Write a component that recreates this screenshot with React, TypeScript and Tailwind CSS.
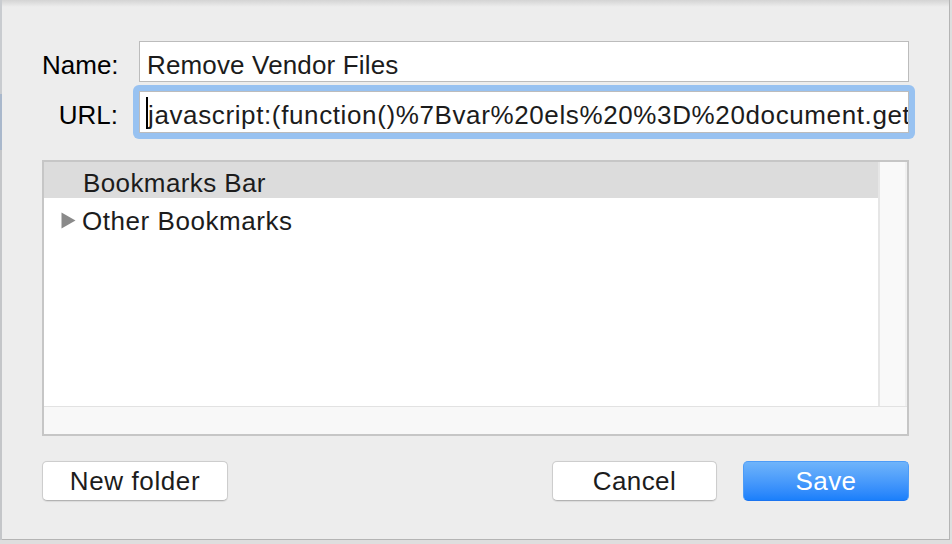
import React from "react";

const font = "font-['Liberation_Sans','Helvetica',Arial,sans-serif]";

function Triangle() {
  return (
    <svg width="15" height="17" viewBox="0 0 15 17" className="shrink-0">
      <path d="M0.5 0.5 L14.5 8.5 L0.5 16.5 Z" fill="#8a8a8a" />
    </svg>
  );
}

export default function App() {
  return (
    <div className={`w-[952px] h-[544px] bg-[#dedede] overflow-hidden flex ${font}`}>
      <div className="w-[2px] h-[540px] flex flex-col shrink-0">
        <div className="h-[94px] bg-[#c9ccd0]" />
        <div className="h-[56px] bg-[#a9b8cc]" />
        <div className="flex-1 bg-[#c4c6c9]" />
      </div>
      <div className="relative w-[948px] h-[540px] shrink-0 bg-[#ededed] border-r border-b border-[#b4b4b4] pl-[40px] pr-[40px] pt-[41px] flex flex-col text-[26px] tracking-[0.4px] text-[#1c1c1c]">
        <div className="absolute left-0 right-0 top-0 h-[7px] bg-gradient-to-b from-[#d4d4d4] to-[#ededed]" />
        <div className="relative flex flex-col gap-[9px]">
          <div className="flex items-start gap-[21px]">
            <div className="w-[76px] text-right leading-[30px] pt-[9px] text-black tracking-[0px]">Name:</div>
            <div className="w-[770px] h-[41px] bg-white border border-[#bcbcbc] pl-[7px] pt-[8px] leading-[30px] whitespace-nowrap overflow-hidden tracking-[0.15px]">
              Remove Vendor Files
            </div>
          </div>
          <div className="flex items-start gap-[21px]">
            <div className="w-[76px] text-right leading-[30px] pt-[9px] text-black tracking-[0px]">URL:</div>
            <div className="-m-[6px] p-[6px] rounded-[6px] bg-[#98c2f1]">
              <div className="relative w-[770px] h-[42px] bg-white border border-[#bcbcbc] pl-[8px] pt-[8px] leading-[30px] whitespace-nowrap overflow-hidden tracking-[0.62px]">
                javascript:(function()%7Bvar%20els%20%3D%20document.get
                <div className="absolute left-[6px] top-[5px] w-[2px] h-[32px] bg-black" />
              </div>
            </div>
          </div>
        </div>

        <div className="mt-[27px] h-[276px] border-2 border-[#c6c6c6] bg-[#f8f8f8] flex flex-col">
          <div className="flex h-[244px]">
            <div className="flex-1 bg-white flex flex-col">
              <div className="h-[36px] bg-[#dcdcdc] pl-[39px] pt-[6px] leading-[30px]">Bookmarks Bar</div>
              <div className="h-[42px] flex items-start pt-[8px] pl-[17px] gap-[6px] leading-[30px]">
                <div className="pt-[6px]">
                  <Triangle />
                </div>
                <span className="tracking-[0.55px]">Other Bookmarks</span>
              </div>
            </div>
            <div className="w-[29px] bg-[#f9f9f9] border-l-2 border-[#e6e6e6] border-r-2 border-r-[#f0f0f0]" />
          </div>
          <div className="flex-1 border-t border-[#e2e2e2] bg-[#f8f8f8]" />
        </div>

        <div className="mt-[25px] flex items-center">
          <button className="w-[186px] h-[40px] bg-white rounded-[5px] border border-[#cdcdcd] border-b-[#b3b3b3] leading-[30px] text-[#1c1c1c] tracking-[0.6px] shadow-[0_0.5px_1px_rgba(0,0,0,0.08)]">
            New folder
          </button>
          <div className="flex-1" />
          <button className="w-[165px] h-[40px] bg-white rounded-[5px] border border-[#cdcdcd] border-b-[#b3b3b3] leading-[30px] text-[#1c1c1c] shadow-[0_0.5px_1px_rgba(0,0,0,0.08)]">
            Cancel
          </button>
          <button className="ml-[26px] w-[166px] h-[40px] rounded-[5px] border border-[#4d9cf7] border-b-[#1a74f0] bg-gradient-to-b from-[#6fb4fa] to-[#1a7ffb] leading-[30px] text-white">
            Save
          </button>
        </div>
      </div>
    </div>
  );
}
